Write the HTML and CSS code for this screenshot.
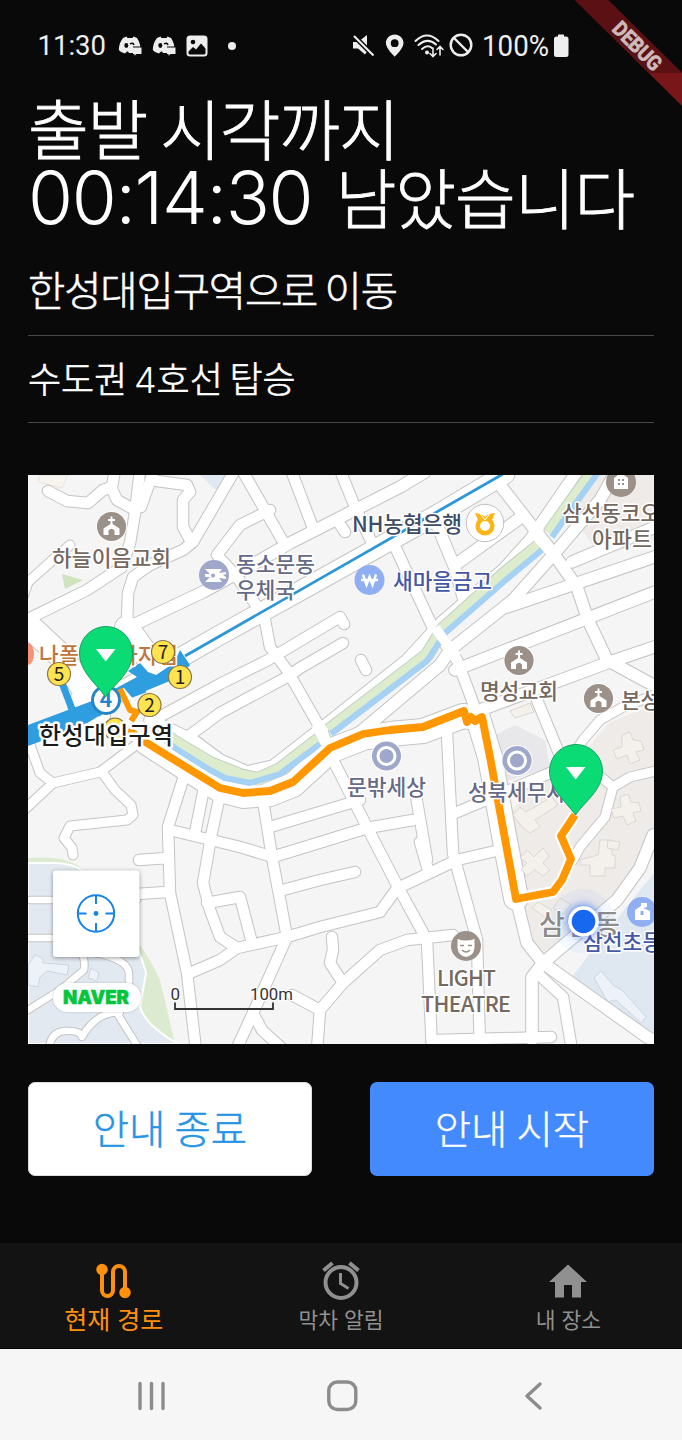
FILE: index.html
```html
<!DOCTYPE html>
<html lang="ko">
<head>
<meta charset="utf-8">
<title>현재 경로</title>
<link rel="stylesheet" href="styles.css">
</head>
<body>
<div class="screen">
  <header class="status">
    <div class="status-left">
      <span class="clock">11:30</span>
      <svg class="ic-discord" width="24" height="21" viewBox="0 0 24 21"><path fill="#eee" d="M5 3 8.500 1.500 9.500 3h5L15.500 1.500 19 3c2 3 3 6 3.300 8.500H15V18H11l-1-1.500H9L7 18.500Q3 18 .8 15 1 8 5 3z"/><ellipse cx="8.300" cy="10.500" rx="2" ry="2.400" fill="#090909"/><path d="M12 9q3-2 4 1" stroke="#090909" stroke-width="1.500" fill="none"/><path fill="#eee" d="M15 12.500h8.500v6.500h-5l-2 1.800V19H15z"/></svg>
      <svg class="ic-discord" width="24" height="21" viewBox="0 0 24 21"><path fill="#eee" d="M5 3 8.500 1.500 9.500 3h5L15.500 1.500 19 3c2 3 3 6 3.300 8.500H15V18H11l-1-1.500H9L7 18.500Q3 18 .8 15 1 8 5 3z"/><ellipse cx="8.300" cy="10.500" rx="2" ry="2.400" fill="#090909"/><path d="M12 9q3-2 4 1" stroke="#090909" stroke-width="1.500" fill="none"/><path fill="#eee" d="M15 12.500h8.500v6.500h-5l-2 1.800V19H15z"/></svg>
      <svg class="ic-photo" width="22" height="22" viewBox="0 0 22 22"><rect x=".5" y=".5" width="21" height="21" rx="3.500" fill="#eee"/><circle cx="7" cy="7" r="2.300" fill="#090909"/><path d="M2.500 16.500 7 12l3 2.500 5-6 4.500 5V18q0 1.500-1.500 1.500H4q-1.500 0-1.500-1.500z" fill="#090909"/></svg>
      <span class="dot"></span>
    </div>
    <div class="status-right">
      <svg width="217" height="40" viewBox="352 25 217 40">
        <path fill="#eee" d="M353 41h5l9-7v16.500l-2 3-7-6h-5z"/><path d="m354 35 20 20" stroke="#090909" stroke-width="5"/><path d="m354 35 19.500 19.500" stroke="#eee" stroke-width="2.200"/>
        <path fill="#eee" fill-rule="evenodd" d="M394.700 33.500c-5 0-8.800 3.700-8.800 8.600 0 5.800 8.800 13.600 8.800 13.600s8.800-7.800 8.800-13.600c0-4.900-3.900-8.600-8.800-8.600zm0 4.800a3.900 3.900 0 1 1 0 7.800 3.900 3.900 0 0 1 0-7.800z"/>
        <g fill="none" stroke="#eee" stroke-width="2" stroke-linecap="round"><path d="M415.500 40q11.500-11 23 0M418.500 44q9-8 17.500-.5M422 48q5.500-5 10-1"/><path d="M433 47v8m-3-2.500 3 3 3-3M440 54v-8m-3 2.500 3-3 3 3" stroke-width="1.600"/></g><circle cx="427" cy="51.500" r="2" fill="#eee"/>
        <circle cx="461" cy="44" r="10.300" fill="none" stroke="#eee" stroke-width="2.400"/><path d="m454 37 14 14" stroke="#eee" stroke-width="2.400"/>
        <text x="482" y="54.500" class="st-text" textLength="67" lengthAdjust="spacingAndGlyphs">100%</text>
        <path fill="#eee" d="M558 33.500h6v2h2q2.500 0 2.500 2.500v15.500q0 2.500-2.500 2.500h-9.500q-2.500 0-2.500-2.500V38q0-2.500 2.500-2.500h1.500z"/>
      </svg>
    </div>
    <svg class="debug" width="110" height="108" viewBox="572 0 110 108"><path d="M575 0h33l74 73v33z" fill="#78161a"/><path d="M575 0h33l74 73h-33.500z" fill="#5b1013"/><text transform="translate(611 30) rotate(45)" class="debug-text" textLength="60" lengthAdjust="spacingAndGlyphs">DEBUG</text></svg>
  </header>

  <main class="content">
    <h1 class="title"><span class="title-a">출발 시각까지</span><br><span class="digits">00:14:30</span> <span class="title-b">남았습니다</span></h1>
    <p class="step step-main">한성대입구역으로 이동</p>
    <p class="step step-sub">수도권 <span class="num">4</span>호선 탑승</p>

    <div class="map">
    <svg width="626" height="569" viewBox="28 475 626 569">
      <defs>
        <g id="church"><circle r="15.500" fill="#fff"/><circle r="14.600" fill="#9c9188"/><path fill="#fff" d="M-1-10h2v2.500h2.500v2H1v3L8 2v6.500H3V4Q0 .5-3 4v4.500h-5V2l7-4.500v-3h-2.500v-2H-1z"/></g>
        <g id="ring"><circle r="15.500" fill="#fff"/><circle r="14.600" fill="#9fa8cb"/><circle r="10" fill="#fff"/><circle r="7" fill="#9fa8cb"/></g>
        <g id="pin"><path d="M0 43C-8 31-26 18-26-1a26.500 26.500 0 0 1 53 0C27 18 8 31 0 43z" fill="#0adb74" stroke="#12a45d" stroke-width="1"/><path d="M-9.500-5H10L.2 7.500z" fill="#fff"/></g>
        <g id="roads">
          <path class="w10" d="M48 491 67 501 88 503 103 490 112 487 115 470M111 487 117 500 135 510"/>
          <path class="w10" d="M140 470 135 513 130 543 122 567 87 590 28 619"/>
          <path class="w10" d="M154 470 141 507M157 481 187 485 190 492 183 500 183 527 190 540"/>
          <path class="w10" d="M235 470 193 542 183 550 150 565 133 577 128 593 127 623"/>
          <path class="w12" d="M127 628 203 592 245 569 290 543 345 515 400 487 425 472"/>
          <path class="w10" d="M270 510 240 525 217 555 237 577 256 605"/>
          <path class="w10" d="M242 470 285 545M291 470 313 528M340 470 355 507 374 547M339 523 345 532"/>
          <path class="w18" d="M120 692 185 655 220 635 300 591 440 513 505 474"/>
          <path class="w10" d="M392 540 405 568 433 628 457 660 478 716"/>
          <path class="w12" d="M437 525 455 568 464 600M455 565 520 518M500 485 553 553 577 587 588 620 607 660 653 685"/>
          <path class="w10" d="M263 610 270 647 287 670 323 733 333 760 367 827 398 887 427 940 432 1050"/>
          <path class="w10" d="M150 722 220 684 268 660 340 617 344 624M190 735 220 713 287 677 300 668 343 643M361 660 366 670"/>
          <path class="w12" d="M150 720 193 740 220 760 247 772 273 766 323 727 407 660 442 622 503 570 530 540 578 470"/>
          <path class="w12" d="M345 745 440 665 450 650 513 600 553 555 600 500 617 470"/>
          <path class="w12" d="M507 607 660 555M455 670 660 590M483 709 607 663 660 645M572 562 660 525"/>
          <path class="w10" d="M537 700 563 763M447 733 453 853 477 940 480 1050M455 813 550 773"/>
          <path class="w8" d="M570 760 583 740 600 720 623 707 660 693M595 772 613 787 630 777 660 770M613 787 605 817 580 847 573 860"/>
          <path class="w12" d="M653 835 640 868 617 900 543 963 527 943 516 898"/>
          <path class="w12" d="M543 963 647 1037 665 1046M543 963 532 977 532 1040"/>
          <path class="w10" d="M537 973 563 997 572 1050"/>
          <path class="w10" d="M437 1040 551 1037M400 887 457 860 500 850M427 860 415 790M420 842 428 870"/>
          <path class="w10" d="M263 800 272 857 287 937 253 1013 236 1050M270 827 360 800M272 857 367 828 413 820"/>
          <path class="w10" d="M210 843 203 883 210 910 220 937 237 948M207 903 240 897 252 943M190 973 220 960 237 948 287 937 320 927 380 912 398 887"/>
          <path class="w10" d="M185 773 168 827 170 893 187 973 196 1050M139 860 167 858M137 894 167 892M170 830 240 847 273 857 367 828"/>
          <path class="w10" d="M220 795 210 841M204 788 195 833M283 890 320 880 355 872"/>
          <path class="w10" d="M292 995 320 1010 317 1050M253 1013 262 1030 275 1042 284 1050M320 1010 343 983 380 950 407 940 453 935M343 983 330 963 333 950 332 937"/>
          <path class="w8" d="M30 745 40 773 53 783 100 772 120 757 145 738M53 783 22 812M102 772 115 790 131 805 133 815 127 820 70 826 64 838 72 848 73 855"/>
          <path class="w8" d="M70 545 55 558 28 582 22 600"/>
          <path class="w24" d="M28 625 60 655 85 690M127 628 150 660M80 705 88 690 98 715"/>
          <path class="w22" d="M147 743 220 790 243 796 270 794 293 785 330 751 363 738 390 734 423 731 463 716 478 718 490 757 503 830 516 898"/>
        </g>
        <path id="campus" class="w7" d="M20 900H137M20 938H55Q88 945 84 970L60 990 20 1015M96 953Q130 960 129 975V990M115 1010 140 1050M49 1050Q50 1032 65 1031T82 1037Q96 1012 120 1012"/>
      </defs>

      <rect x="28" y="475" width="626" height="569" fill="#f5f5f6"/>
      <path d="M595 475H654V540L600 556 572 515z" fill="#efebe9"/>
      <path d="M505 815 560 770 590 745 610 722 654 705V840L620 895 545 957 527 935 516 898z" fill="#efebe9"/>
      <path d="M492 737 515 725 545 740 550 767 502 783z" fill="#e8e8ea"/>
      <path d="M28 858Q70 855 83 870 145 945 160 980L175 1044H28z" fill="#dcebd0"/>
      <path d="M28 863H57Q80 865 85 874 135 930 146 973L140 1007Q145 1025 178 1044H28z" fill="#e2e9f1" stroke="#fff" stroke-width="2"/>
      <path d="M570 980 600 940 654 873V1034L635 1022z" fill="#dfe8f1"/>
      <path d="M200 475 218 492 228 475z" fill="#dfe8f3"/>
      <path d="M40 475 38 482 62 488 68 475z" fill="#f7f3ef" stroke="#ddd6cf" stroke-width=".6"/>
      <path d="M62 574 83 580 65 589z" fill="#cfe4bd"/>
      <g fill="#edf2f8" stroke="#ccd6e2" stroke-width="1"><path d="M35 955 43 958 43 963 69 965 67 975 47 971 40 977 38 987 28 985V965zM91 968 99 973 97 981 88 978zM594 978 601 971 614 986 622 990 646 1017 641 1023 616 1000 608 1002z"/></g>
      <g class="road-edge"><use href="#roads"/><use href="#campus"/></g>
      <g class="road-fill"><use href="#roads"/><use href="#campus"/></g>
      <g fill="#f4f0ec" stroke="#ddd7d0" stroke-width="1">
          <path d="M622 735 630 732 633 740 641 741 644 750 636 752 640 760 630 764 627 755 617 759 613 750 622 747z"/>
          <path d="M620 797 628 794 631 802 639 803 641 811 633 813 636 821 627 825 623 816 614 818 611 809 621 807z"/>
          <path d="M513 815 520 807 526 812 552 797 558 805 535 820 540 827 530 833 522 827z"/>
          <path d="M520 858 527 850 534 857 543 848 549 856 543 863 550 870 543 876 535 870 527 876 521 869 527 863z"/>
          <path d="M580 860 598 855 600 840H612V855H615V868H605V876H590V865H580z"/>
          <path d="M510 711 530 703 534 712 515 718zM532 908 538 902 552 910 546 918zM560 898 571 905 563 914 553 908zM608 840 620 842 618 850 607 848z"/>
      </g>

      <g fill="none" stroke-linejoin="round">
        <path d="M162 732 173 741 210 763 240 775 258 779 280 769 319 739M329 730 427 655 443 629 505 573 541 544M549 533 566 509 593 472" stroke="#c5cec3" stroke-width="14"/>
        <path d="M162 732 173 741 210 763 240 775 258 779 280 769 319 739M329 730 427 655 443 629 505 573 541 544M549 533 566 509 593 472" stroke="#dceccd" stroke-width="12"/>
        <path d="M165 740 175 748 210 770 225 778 250 783 280 774 320 744M331 734 427 661 445 633 507 579 543 549M552 537 568 514 597 474" stroke="#a5d1f4" stroke-width="6"/>
      </g>
      <g fill="none" stroke="#fff" stroke-width="10"><path d="M316 724 333 757M435 628 457 657M533 532 562 565"/></g>
      <path d="M165 751 220 785 243 789 270 787 291 778 326 745" fill="none" stroke="#fff" stroke-width="5"/>

      <path d="M185 656 503 474" stroke="#2d96d6" stroke-width="2.800"/>
      <path d="M28 725 92 701 137 677 128 671 140 663 148 672 156 675 174 663 180 650 190 665 178 678 150 691 120 702 90 723 28 746z" fill="#2e9ee0"/>
      <path d="M62 683 72 709" stroke="#2e9ee0" stroke-width="7"/>
      <path d="M146 692 175 680" stroke="#fff" stroke-width="2"/><path d="M81 728 99 717" stroke="#fff" stroke-width="2"/>

      <g fill="none" stroke-linejoin="round">
        <path d="M120 691 135 709 134 720 128 724" stroke="#fff" stroke-width="10"/><path d="M120 689 130 710 137 712 131 721" stroke="#ff9700" stroke-width="6"/>
        <path d="M128 730 147 743 220 788 243 793 270 791 293 782 330 748 363 734 390 730 423 727 464 711 468 722 483 718 490 757 516 899 553 892 562 880 571 859 561 836 575 815" stroke="#fff" stroke-width="12"/>
        <path d="M128 730 147 743 220 788 243 793 270 791 293 782 330 748 363 734 390 730 423 727 464 711 467 722 471 717 475 721 482 717 490 757 516 899 553 892 562 880 571 859 561 836 575 815" stroke="#ff9700" stroke-width="7.800"/>
      </g>

      <use href="#church" x="111.500" y="526.500"/><use href="#church" x="519" y="660.500"/><use href="#church" x="598.500" y="698.500"/>
      <use href="#ring" x="386.500" y="756"/><use href="#ring" x="517" y="760.500"/>
      <circle cx="214" cy="575" r="15" fill="#9fa8cb"/><path d="M205 569h17l-3 4 7-1v2l-3 1 3 2v2l-7-1 3 4h-17l5-5h-5v-3h5z" fill="#fff"/><circle cx="213" cy="575.500" r="2" fill="#9fa8cb"/>
      <circle cx="369.500" cy="580" r="15" fill="#90aff2"/><path d="M363 574.500 366.500 585 369.500 577 372.500 585 376 574.500M361 580h17" fill="none" stroke="#fff" stroke-width="2.400"/>
      <circle cx="485" cy="523" r="18.700" fill="#fff" stroke="#c5bec0"/><circle cx="485" cy="526" r="7.300" fill="none" stroke="#fdb515" stroke-width="4.500"/><path d="M475 513 481 514 485 517 489 514 495 513 492 520 478 520z" fill="#fdb515"/><path d="m480 513.500 5 6.500 5-6.500" fill="none" stroke="#fff" stroke-width="1"/>
      <circle cx="621" cy="482" r="15" fill="#9c9188"/><path d="M614 478 621 473 628 478V489H614z" fill="#fff"/><path d="M618 480h2m2 0h2m-6 4h2m2 0h2" stroke="#9c9188" stroke-width="2"/>
      <circle cx="466" cy="946" r="15" fill="#9c9188"/><path d="M457.500 939q8.500 3 17 0v9q-1 8-8.500 9-7.500-1-8.500-9z" fill="#fff"/><path d="M460 945.500h4m4 0h4M462 950q4 4 8 0" fill="none" stroke="#9c9188" stroke-width="1.600"/>
      <path d="M28 643a6 11 0 0 1 0 22z" fill="#f69376"/>
      <circle cx="642" cy="912" r="15" fill="#90aff2"/><path d="M635 910 641 906V903H647V907L643 908 650 911V920H635z" fill="#fff"/><rect x="640.500" y="911" width="3" height="4" fill="#90aff2"/>

      <g class="lbl lbl-brown">
        <text x="52" y="566" textLength="119">하늘이음교회</text>
        <text x="480" y="699" textLength="78">명성교회</text>
        <text x="621" y="708" textLength="59">본성교</text>
        <text x="562" y="521" textLength="98">삼선동코오</text>
        <text x="592" y="547" textLength="60">아파트</text>
        <text x="437" y="986" textLength="59">LIGHT</text>
        <text x="421" y="1012" textLength="90">THEATRE</text>
      </g>
      <g class="lbl lbl-slate">
        <text x="236" y="572" textLength="79">동소문동</text>
        <text x="236" y="598" textLength="59">우체국</text>
        <text x="347" y="795" textLength="79">문밖세상</text>
        <text x="468" y="800" textLength="98">성북세무사</text>
      </g>
      <text class="lbl lbl-navy" x="352" y="532" textLength="110">NH농협은행</text>
      <g class="lbl lbl-blue"><text x="393" y="589" textLength="99">새마을금고</text></g>
      <g class="lbl lbl-orange"><text x="39" y="663" textLength="40">나폴</text><text x="118" y="663" textLength="60">마자집</text></g>

      <g class="exit">
        <circle cx="115" cy="729" r="11"/>
        <circle cx="59" cy="674" r="11.500"/><circle cx="163" cy="652" r="11.500"/><circle cx="180" cy="677" r="11.500"/><circle cx="149.500" cy="705" r="11.500"/>
        <text x="59" y="681">5</text><text x="163" y="659">7</text><text x="180" y="684">1</text><text x="149.500" y="712">2</text>
      </g>
      <circle cx="106" cy="700" r="13.500" fill="#fff" stroke="#2486c6" stroke-width="3"/><text class="line4" x="106" y="707">4</text>
      <use href="#pin" x="105.500" y="654"/>
      <use href="#pin" x="575.500" y="772"/>
      <text class="lbl lbl-station" x="39" y="744" textLength="134">한성대입구역</text>

      <circle cx="583" cy="921" r="32" fill="#4a80ff" opacity=".06"/>
      <text class="dong" x="539" y="935" textLength="81">삼선동</text>
      <g class="lbl lbl-blue"><text x="583" y="950" textLength="99">삼선초등학</text></g>
      <circle class="glow" cx="583" cy="921" r="16"/><circle cx="583.500" cy="921.500" r="15.300" fill="#fff"/><circle cx="583.500" cy="921.500" r="11.800" fill="#1868ef"/>

      <rect class="locate" x="53" y="870.500" width="86.500" height="86.500" rx="3"/>
      <g fill="none" stroke="#1583e8" stroke-width="2"><circle cx="96" cy="913.500" r="18.200"/><path d="M96 895v9M96 923v9M77.500 913.500h9M105.500 913.500h9"/></g><circle cx="96" cy="913.500" r="2.400" fill="#1583e8"/>
      <rect class="naver-bg" x="53" y="983" width="88" height="29" rx="14.500"/>
      <text class="naver" x="63" y="1004" textLength="66" lengthAdjust="spacingAndGlyphs">NAVER</text>
      <path d="M175 1002.500V1009H273V1002.500" fill="none" stroke="#333" stroke-width="1.800"/>
      <text class="scale" x="170.500" y="1000">0</text><text class="scale" x="250" y="1000" textLength="43" lengthAdjust="spacingAndGlyphs">100m</text>
    </svg>
    </div>

    <div class="actions">
      <button class="btn btn-stop">안내 종료</button>
      <button class="btn btn-start">안내 시작</button>
    </div>
  </main>

  <nav class="tabs">
    <div class="tab active">
      <svg width="36" height="38" viewBox="96 1262 36 38"><path d="M102 1271V1290.500a5.500 5.500 0 0 0 11 0V1272a6 6 0 0 1 12 0V1290" fill="none" stroke="#ff900c" stroke-width="4"/><circle cx="102" cy="1269.500" r="5.700" fill="#ff900c"/><circle cx="125" cy="1292.500" r="5.700" fill="#ff900c"/></svg>
      <span>현재 경로</span>
    </div>
    <div class="tab">
      <svg width="42" height="42" viewBox="320 1260 42 42"><g fill="none" stroke="#909090" stroke-width="4"><circle cx="341" cy="1282.500" r="15.500"/><path d="m323.500 1270.500 9-7.500m26 7.500-9-7.500"/><path d="M340.500 1273v10.500l8 5" stroke-width="3"/></g></svg>
      <span>막차 알림</span>
    </div>
    <div class="tab">
      <svg width="38" height="36" viewBox="549 1262 38 36"><path fill="#909090" d="m568 1263.500 19 17.500h-6v15.500h-9V1284h-8v12.500h-9V1281h-6z"/></svg>
      <span>내 장소</span>
    </div>
  </nav>
  <footer class="sysnav">
    <svg width="682" height="91" viewBox="0 1349 682 91" fill="none" stroke="#8c8c8c" stroke-width="3.400" stroke-linecap="round" stroke-linejoin="round"><path d="M140 1383.500v25M151.500 1383.500v25M163 1383.500v25"/><rect x="328.800" y="1382" width="27" height="27.500" rx="8.500"/><path d="m540 1384-13 12 13 12"/></svg>
  </footer>
</div>
</body>
</html>
```
FILE: styles.css
```css
* { box-sizing: border-box; }
body { margin: 0; background: #090909; }
.screen {
  position: relative;
  width: 682px;
  height: 1440px;
  display: flex;
  flex-direction: column;
  overflow: hidden;
  background: #090909;
  color: #fff;
  font-family: "Noto Sans CJK KR", sans-serif;
}
.status {
  height: 72px;
  padding: 19px 113px 0 37.500px;
  display: flex;
  justify-content: space-between;
  align-items: center;
}
.status-left { display: flex; align-items: center; gap: 10px; }
.clock { font: 400 27.500px/30px Roboto, sans-serif; color: #eee; width: 70px; }
.dot { width: 8px; height: 8px; border-radius: 50%; background: #eee; margin-left: 10px; }
.status-right { display: flex; align-items: center; }
.st-text { font: 400 29px Roboto, sans-serif; fill: #eee; }
.debug { position: absolute; top: 0; right: 0; }
.debug-text { font: 700 21px Roboto, sans-serif; fill: #cdbaba; stroke: #cdbaba; stroke-width: .7px; }

.content { padding: 20px 28px 0; display: flex; flex-direction: column; }
.title {
  margin: 0;
  height: 144px;
  font-size: 66px;
  font-weight: 300;
  line-height: 69px;
  letter-spacing: -1px;
  word-spacing: -4px;
  white-space: nowrap;
  -webkit-text-stroke: .8px #fff;
}
.title-a { letter-spacing: -1.200px; }
.digits { font-family: Inter, sans-serif; font-size: 73px; line-height: 60px; letter-spacing: -1.400px; margin-right: 10px; -webkit-text-stroke: 0; }
.step { margin: 0; border-bottom: 1px solid #484848; font-weight: 300; white-space: nowrap; -webkit-text-stroke: .6px #fff; }
.step-main { height: 100px; padding-top: 23px; font-size: 40.500px; line-height: 60px; letter-spacing: -1.100px; word-spacing: -3px; }
.step-sub { height: 87px; padding-top: 12px; font-size: 36px; line-height: 58px; letter-spacing: 0; word-spacing: -3.500px; }
.num { font-family: Inter, sans-serif; font-size: 36px; line-height: 40px; -webkit-text-stroke: 0; }

.map { margin-top: 52px; height: 569px; width: 626px; overflow: hidden; }
.map svg { display: block; }
.road-edge, .road-fill { --edge: 0px; fill: none; stroke: #fff; stroke-linecap: round; stroke-linejoin: round; }
.road-edge { --edge: 2px; stroke: #c4c4c4; }
.w7 { stroke-width: calc(6.500px + var(--edge)); }
.w8 { stroke-width: calc(9px + var(--edge)); }
.w10 { stroke-width: calc(10.500px + var(--edge)); }
.w12 { stroke-width: calc(11.500px + var(--edge)); }
.w18 { stroke-width: calc(19px + var(--edge)); }
.w22 { stroke-width: calc(24px + var(--edge)); }
.w24 { stroke-width: calc(24px + var(--edge)); }
.lbl { font-size: 21.500px; font-weight: 500; stroke: #fff; stroke-width: 3px; stroke-linejoin: round; paint-order: stroke; }
.lbl-brown { fill: #756860; }
.lbl-slate { fill: #656a86; }
.lbl-navy { fill: #3e4c66; }
.lbl-blue { fill: #4558a5; }
.lbl-orange { fill: #c27539; }
.lbl-station { fill: #1b1b1b; font-size: 24px; stroke-width: 5px; }
.dong { font-size: 28px; font-weight: 500; fill: #8e8b8b; stroke: #fff; stroke-width: 2px; paint-order: stroke; }
.glow { fill: #2f70f0; opacity: .8; filter: blur(4px); }
.exit circle { fill: #ffe34f; stroke: #8b7645; stroke-width: 1.200px; }
.exit text { font-size: 19px; font-weight: 400; text-anchor: middle; fill: #222; }
.line4 { font-size: 21px; font-weight: 700; text-anchor: middle; fill: #2486c6; }
.locate, .naver-bg { fill: #fff; filter: drop-shadow(0 1px 2px rgba(0, 0, 0, .4)); }
.naver-bg { filter: drop-shadow(0 0 1px rgba(0, 0, 0, .2)); }
.naver { font: 900 18.500px Inter, sans-serif; fill: #03c63c; stroke: #03c63c; stroke-width: .5px; }
.scale { font: 400 17px Roboto, sans-serif; fill: #333; stroke: #fff; stroke-width: 2px; paint-order: stroke; }

.actions { margin-top: 38px; display: flex; justify-content: space-between; }
.btn {
  width: 284px;
  height: 94px;
  padding: 0 0 4px;
  border: 0;
  border-radius: 7px;
  font: 300 39.500px/60px "Noto Sans CJK KR", sans-serif;
  word-spacing: -2px;
}
.btn-stop { background: #fff; color: #2594e5; border: 1px solid #ddd; -webkit-text-stroke: .5px #2594e5; }
.btn-start { background: #448aff; color: #fff; -webkit-text-stroke: .4px #fff; }

.tabs { margin-top: auto; height: 106px; display: flex; background: #131313; border-bottom: 1px solid #050505; }
.tab { flex: 1; display: flex; flex-direction: column; align-items: center; color: #909090; font-size: 21.500px; line-height: 28px; padding-top: 17px; }
.tab svg { height: 42px; }
.tab span { margin-top: 3px; }
.tab.active { color: #ff900c; font-size: 25px; }
.tab.active span { margin-top: 2px; }
.sysnav { height: 91px; background: #f6f6f6; }
.sysnav svg { display: block; }
```
